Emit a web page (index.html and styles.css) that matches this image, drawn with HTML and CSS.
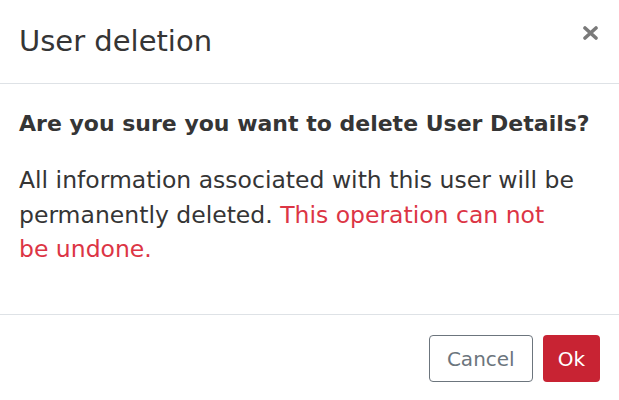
FILE: index.html
```html
<!DOCTYPE html>
<html lang="en">
  <head>
    <meta charset="UTF-8" />
    <meta name="viewport" content="width=device-width, initial-scale=1.0" />
    <title>User deletion</title>
    <link rel="stylesheet" href="styles.css">
  </head>
  <body>
    <div class="modal">
      <!-- header -->
      <div class="modal-header">
        <h5 class="modal-title">User deletion</h5>
        <button class="close" type="button" aria-label="Close">
          <svg width="15" height="14" viewBox="0 0 15 14">
            <path d="M2 2 L13 12 M13 2 L2 12" stroke="#7a7a7a" stroke-width="3.6" stroke-linecap="round" />
          </svg>
        </button>
      </div>
      <!-- body -->
      <div class="modal-body">
        <p class="question">Are you sure you want to delete User Details?</p>
        <p class="text">
          All information associated with this user will be permanently deleted.
          <span class="danger">This operation can not be undone.</span>
        </p>
      </div>
      <!-- footer -->
      <div class="modal-footer">
        <button class="btn btn-cancel" type="button">Cancel</button>
        <button class="btn btn-ok" type="button">Ok</button>
      </div>
    </div>
  </body>
</html>
```

FILE: styles.css
```css
* {
  padding: 0;
  margin: 0;
  box-sizing: border-box;
}
body {
  font-family: "DejaVu Sans", "Liberation Sans", sans-serif;
  color: #353535;
  background: #fff;
}
.modal {
  width: 619px;
  height: 400px;
  background: #fff;
}
.modal-header {
  display: flex;
  justify-content: space-between;
  align-items: flex-start;
  padding: 22px 19px 22px 19px;
  border-bottom: 1px solid #dee2e6;
}
.modal-title {
  font-size: 29px;
  font-weight: 400;
  line-height: 39px;
}
.close {
  background: none;
  border: none;
  margin-top: 4px;
  margin-right: 2px;
  display: flex;
}
.modal-body {
  padding: 25px 19px 0 19px;
  height: 230px;
}
.question {
  font-size: 22px;
  font-weight: 700;
  line-height: 30px;
  margin-bottom: 24px;
}
.text {
  max-width: 558px;
  font-size: 23.5px;
  line-height: 34.5px;
}
.danger {
  color: #dc3545;
}
.modal-footer {
  display: flex;
  justify-content: flex-end;
  gap: 10px;
  padding: 20px 19px;
  border-top: 1px solid #dee2e6;
}
.btn {
  font-family: inherit;
  font-size: 20px;
  height: 47px;
  padding: 0 17px;
  border-radius: 4px;
  border: 1px solid transparent;
}
.btn-cancel {
  background: #fff;
  color: #6c757d;
  border-color: #6c757d;
}
.btn-ok {
  padding: 0 14px;
  background: #c82333;
  color: #fff;
}
```
